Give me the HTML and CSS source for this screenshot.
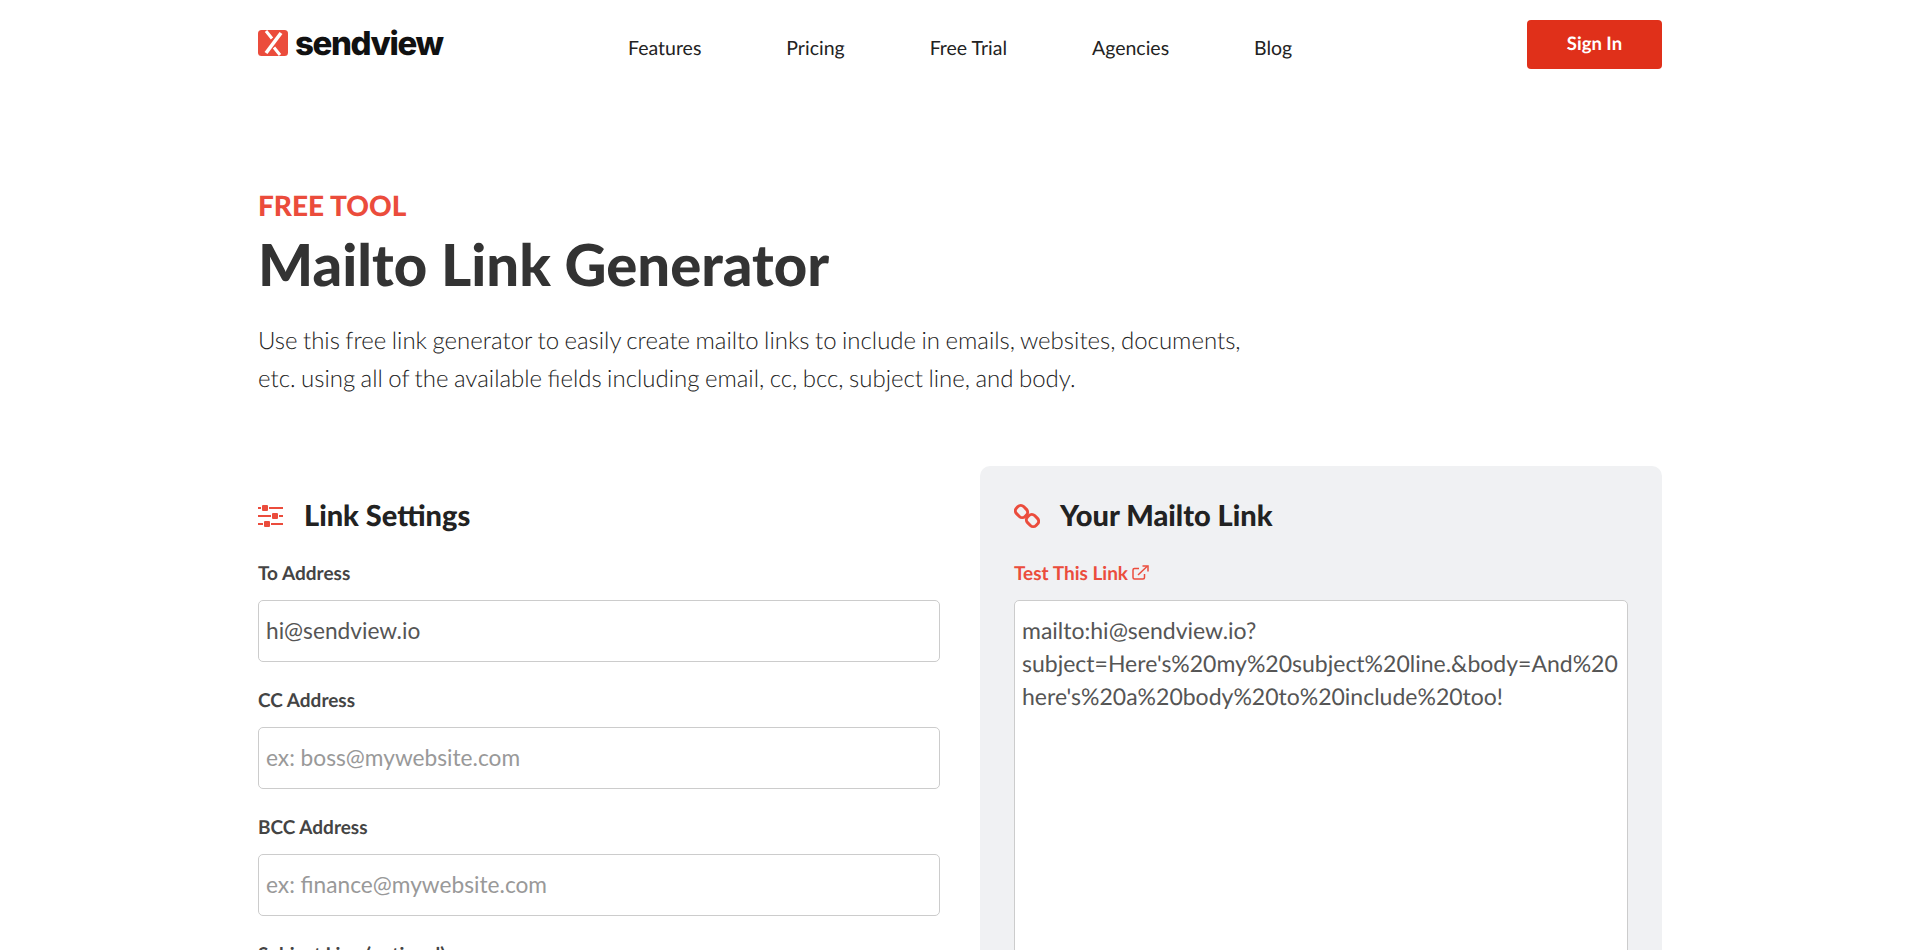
FILE: index.html
```html
<!DOCTYPE html>
<html lang="en">
    <head>
        <title>Mailto Link Generator</title>
        <meta http-equiv="content-type" content="text/html; charset=UTF-8" />
        <meta name="viewport" content="width=device-width, initial-scale=1">
        <link rel="stylesheet" href="styles.css">
    </head>

    <body>
        <div class="wrapper">
            <div class="header">
                <a class="logo" href="#">
                    <svg width="30" height="26" viewBox="0 0 30 26">
                        <rect width="30" height="26" rx="3.5" fill="#eb4c3c"/>
                        <path d="M8 1 L14 8.5 M16 17.5 L22 25" fill="none" stroke="#fff" stroke-width="3"/>
                        <path d="M23 3 L8 23" fill="none" stroke="#fff" stroke-width="3.6"/>
                    </svg>
                    <span>sendview</span>
                </a>
                <div class="nav">
                    <a href="#">Features</a>
                    <a href="#">Pricing</a>
                    <a href="#">Free Trial</a>
                    <a href="#">Agencies</a>
                    <a href="#">Blog</a>
                </div>
                <a class="signin" href="#">Sign In</a>
            </div>

            <div class="intro">
                <div class="eyebrow">FREE TOOL</div>
                <h1>Mailto Link Generator</h1>
                <p>Use this free link generator to easily create mailto links to include in emails, websites, documents, etc. using all of the available fields including email, cc, bcc, subject line, and body.</p>
            </div>

            <div class="columns">
                <div class="settings">
                    <h2>
                        <svg width="26" height="24" viewBox="0 0 26 24" fill="#eb4c3c">
                            <path d="M0 3h3v2H0zM11 3h14v2H11zM0 11h13v2H0zM21 11h4v2h-4zM0 19h5v2H0zM13 19h12v2H13z"/>
                            <rect x="4" y="1" width="6" height="6" rx="1"/>
                            <rect x="14" y="9" width="6" height="6" rx="1"/>
                            <rect x="6" y="17" width="6" height="6" rx="1"/>
                        </svg>
                        Link Settings
                    </h2>
                    <label>To Address</label>
                    <input class="field" type="text" value="hi@sendview.io">
                    <label>CC Address</label>
                    <input class="field" type="text" placeholder="ex: boss@mywebsite.com">
                    <label>BCC Address</label>
                    <input class="field" type="text" placeholder="ex: finance@mywebsite.com">
                    <label>Subject Line (optional)</label>
                    <input class="field" type="text" value="Here's my subject line.">
                </div>

                <div class="result">
                    <h2>
                        <svg width="26" height="26" viewBox="0 0 26 26" fill="none" stroke="#eb4c3c" stroke-width="3">
                            <rect x="1.5" y="3.5" width="12" height="10" rx="4" transform="rotate(45 7.5 8.5)"/>
                            <rect x="12.5" y="12.5" width="12" height="10" rx="4" transform="rotate(45 18.5 17.5)"/>
                        </svg>
                        Your Mailto Link
                    </h2>
                    <a class="testlink" href="#">Test This Link
                        <svg class="external" width="17" height="15" viewBox="0 0 17 15" fill="none" stroke="#eb4c3c" stroke-width="1.5">
                            <path d="M12.5 9 V12.5 Q12.5 14 11 14 H2.5 Q1 14 1 12.5 V5 Q1 3.5 2.5 3.5 H7"/>
                            <path d="M6 10 L15 1.5"/>
                            <path d="M10.5 1 H16 V6.5"/>
                        </svg>
                    </a>
                    <div class="output">mailto:hi@sendview.io?<br>subject=Here's%20my%20subject%20line.&amp;body=And%20<br>here's%20a%20body%20to%20include%20too!</div>
                </div>
            </div>
        </div>
    </body>
</html>
```
FILE: styles.css
```css
html, body {
    margin: 0;
    font-family: Lato, Arial, sans-serif;
    color: #333;
    background: white;
    text-rendering: geometricPrecision;
}
a {
    text-decoration: none;
}
.wrapper {
    width: 1404px;
    margin: 0 auto;
}

.header {
    display: flex;
    align-items: flex-start;
    height: 69px;
    padding-top: 20px;
}
.logo {
    display: flex;
    align-items: center;
    gap: 7px;
    width: 370px;
    height: 46px;
}
.logo span {
    font-family: Inter, sans-serif;
    font-size: 33px;
    font-weight: 800;
    letter-spacing: -1.4px;
    color: #111;
}
.nav {
    display: flex;
    gap: 85px;
    padding-top: 17px;
    font-size: 19.5px;
}
.nav a {
    color: #222;
}
.signin {
    margin-left: auto;
    width: 135px;
    height: 49px;
    line-height: 46px;
    border-radius: 4px;
    background: #e0301a;
    color: white;
    font-size: 18.5px;
    font-weight: 700;
    text-align: center;
}

.intro {
    padding-top: 99px;
}
.eyebrow {
    font-size: 28px;
    line-height: 34px;
    font-weight: 900;
    color: #eb4c3c;
}
h1 {
    margin: 7px 0 0;
    font-size: 58px;
    line-height: 72px;
    font-weight: 900;
    color: #333;
}
.intro p {
    width: 1000px;
    margin: 21px 0 0;
    font-size: 24px;
    line-height: 38px;
    font-weight: 300;
    word-spacing: -1.1px;
    color: #222;
}

.columns {
    display: grid;
    grid-template-columns: 682px 682px;
    gap: 40px;
    margin-top: 68px;
}
.settings {
    padding-top: 30px;
}
.result {
    padding: 30px 34px 34px;
    border-radius: 10px;
    background: #f0f1f3;
}
h2 {
    display: flex;
    align-items: center;
    gap: 20px;
    margin: 0 0 26px;
    font-size: 29px;
    line-height: 40px;
    font-weight: 900;
    color: #222;
}
label,
.testlink {
    display: block;
    font-size: 19px;
    line-height: 24px;
    font-weight: 700;
    color: #444;
}
.testlink {
    color: #eb4c3c;
}
.external {
    margin-left: -1px;
}
.field,
.output {
    display: block;
    box-sizing: border-box;
    width: 100%;
    margin: 14px 0 27px;
    padding: 0 7px 2px;
    border: 1px solid #ccc;
    border-radius: 5px;
    background: white;
    font-family: Lato, Arial, sans-serif;
    font-size: 22.7px;
    color: #555;
}
.field {
    height: 62px;
}
.field::placeholder {
    color: #999;
    opacity: 1;
}
.output {
    height: 600px;
    padding: 13px 7px;
    font-size: 23px;
    line-height: 33px;
}
```
